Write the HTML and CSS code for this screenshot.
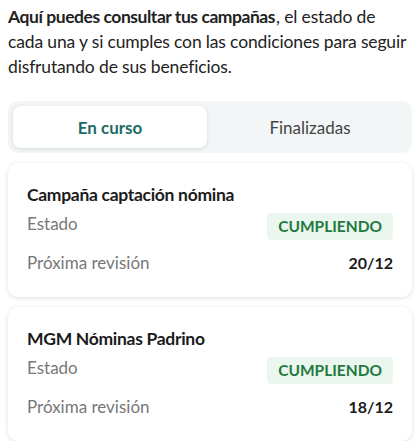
FILE: index.html
```html
<!DOCTYPE html>
<html lang="es">

<head>
    <meta charset="UTF-8">
    <meta name="viewport" content="width=device-width, initial-scale=1.0">
    <title>Campañas</title>
    <link rel="stylesheet" href="styles.css">
</head>

<body>
    <p class="intro"><strong>Aquí puedes consultar tus campañas</strong>, el estado de cada una y si cumples con las condiciones para seguir disfrutando de sus beneficios.</p>

    <div class="tabs">
        <button class="tab active">En curso</button>
        <button class="tab">Finalizadas</button>
    </div>

    <div class="card">
        <h2 class="card-title">Campaña captación nómina</h2>
        <div class="row status">
            <span class="label">Estado</span>
            <span class="badge">CUMPLIENDO</span>
        </div>
        <div class="row">
            <span class="label">Próxima revisión</span>
            <span class="value">20/12</span>
        </div>
    </div>

    <div class="card">
        <h2 class="card-title">MGM Nóminas Padrino</h2>
        <div class="row status">
            <span class="label">Estado</span>
            <span class="badge">CUMPLIENDO</span>
        </div>
        <div class="row">
            <span class="label">Próxima revisión</span>
            <span class="value">18/12</span>
        </div>
    </div>
</body>

</html>
```

FILE: styles.css
```css
body {
    font-family: Lato, "Open Sans", sans-serif;
    margin: 0;
    padding: 0 8px;
    background: #ffffff;
    color: #222222;
}

.intro {
    margin: 4px 0 0;
    font-size: 17.5px;
    line-height: 25px;
    letter-spacing: -0.15px;
}

.intro strong {
    margin-right: 1px;
    font-weight: 700;
    letter-spacing: -0.45px;
}

.tabs {
    display: flex;
    gap: 6px;
    margin-top: 22px;
    padding: 5px;
    background: #f2f6f7;
    border-radius: 10px;
}

.tab {
    flex: 1;
    height: 42px;
    font-family: inherit;
    font-size: 17px;
    color: #444444;
    background: none;
    border: none;
    border-radius: 8px;
}

.tab.active {
    background: #ffffff;
    color: #1d6b66;
    font-weight: 700;
    box-shadow: 0 1px 4px rgba(0, 0, 0, 0.12);
}

.card {
    margin-top: 10px;
    padding: 20px 19px 16px;
    background: #ffffff;
    border-radius: 10px;
    box-shadow: 0 1px 5px rgba(0, 0, 0, 0.13);
}

.card-title {
    margin: 0 0 1px;
    font-size: 17.5px;
    line-height: 24px;
    font-weight: 700;
    letter-spacing: -0.3px;
    color: #1b1b1b;
}

.row {
    display: flex;
    justify-content: space-between;
    align-items: center;
    height: 37px;
}

.row.status {
    height: 36px;
}

.status .label {
    margin-top: -6px;
}

.label {
    font-size: 17px;
    color: #777777;
}

.badge {
    padding: 5px 11px;
    font-size: 15.5px;
    line-height: 17px;
    font-weight: 700;
    color: #1e7a3e;
    background: #ebf6ee;
    border-radius: 4px;
}

.value {
    font-size: 16px;
    font-weight: 700;
    color: #1b1b1b;
}
```
